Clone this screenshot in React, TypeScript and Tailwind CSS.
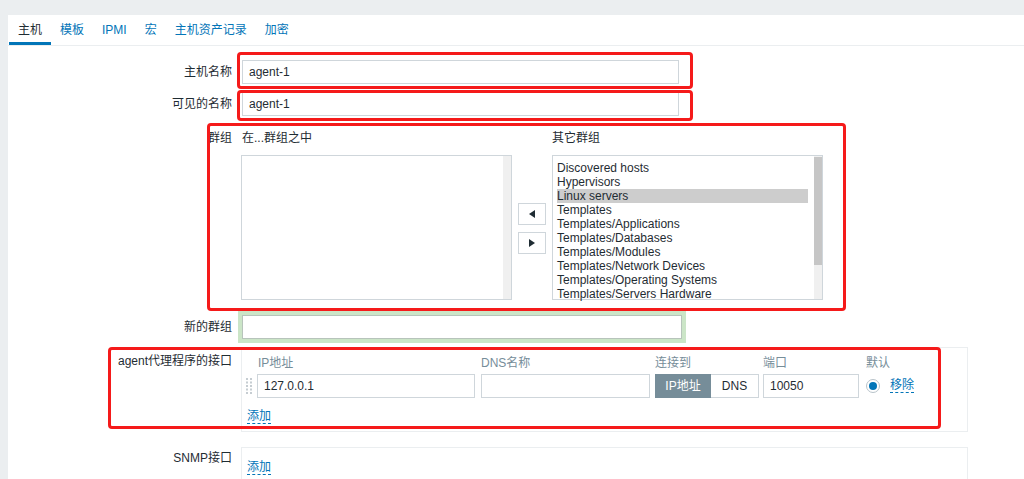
import React from "react";

const groups = [
  "Discovered hosts",
  "Hypervisors",
  "Linux servers",
  "Templates",
  "Templates/Applications",
  "Templates/Databases",
  "Templates/Modules",
  "Templates/Network Devices",
  "Templates/Operating Systems",
  "Templates/Servers Hardware",
];

function Tab({ label, active }: { label: string; active?: boolean }) {
  return (
    <div
      className={
        active
          ? "px-[9px] flex items-center border-b-[3px] border-[#0275b8] text-[#1f2c33] pt-[3px]"
          : "px-[9px] flex items-center border-b-[3px] border-transparent text-[#0275b8] pt-[3px]"
      }
    >
      {label}
    </div>
  );
}

function Handle() {
  return (
    <svg width="6" height="16" viewBox="0 0 6 16" className="block">
      {[0, 1, 2, 3, 4].map((r) =>
        [0, 1].map((c) => (
          <rect key={`${r}-${c}`} x={c * 4} y={r * 3.5} width="2" height="2" fill="#c6cdd2" />
        ))
      )}
    </svg>
  );
}

export default function App() {
  return (
    <div className="relative w-[1024px] h-[479px] overflow-hidden bg-[#ebeef0] pt-[15px] pl-[8px] text-[12px] leading-[14px] text-[#1f2c33] font-['Liberation_Sans','Noto_Sans_CJK_SC',sans-serif]">
      <div className="bg-white h-full">
        {/* Tabs */}
        <div className="flex h-[31px] border-b border-[#ebeef0] pl-[1px]">
          <Tab label="主机" active />
          <Tab label="模板" />
          <Tab label="IPMI" />
          <Tab label="宏" />
          <Tab label="主机资产记录" />
          <Tab label="加密" />
        </div>

        <div className="pt-[14px]">
          {/* Host name */}
          <div className="flex items-center">
            <div className="w-[224px] text-right">主机名称</div>
            <div className="ml-[10px] w-[437px] h-[24px] border border-[#cfd6db] flex items-center pl-[6px]">agent-1</div>
          </div>

          {/* Visible name */}
          <div className="flex items-center mt-[8px]">
            <div className="w-[224px] text-right">可见的名称</div>
            <div className="ml-[10px] w-[437px] h-[24px] border border-[#cfd6db] flex items-center pl-[6px]">agent-1</div>
          </div>

          {/* Groups */}
          <div className="flex items-start mt-[15px]">
            <div className="w-[224px] text-right">群组</div>
            <div className="ml-[9px] flex items-center">
              <div className="w-[271px]">
                <div className="h-[14px] pl-[1px]">在...群组之中</div>
                <div className="mt-[10px] h-[145px] border border-[#cfd6db] flex justify-end">
                  <div className="w-[8px] h-full bg-[#f0f0f0]" />
                </div>
              </div>
              <div className="mx-[6px] mt-[25px] flex flex-col gap-[7px]">
                <div className="w-[28px] h-[22px] border border-[#cfd6db] flex items-center justify-center bg-white">
                  <svg width="6" height="8" viewBox="0 0 6 8"><path d="M6 0 L0 4 L6 8 Z" fill="#1f2c33" /></svg>
                </div>
                <div className="w-[28px] h-[22px] border border-[#cfd6db] flex items-center justify-center bg-white">
                  <svg width="6" height="8" viewBox="0 0 6 8"><path d="M0 0 L6 4 L0 8 Z" fill="#1f2c33" /></svg>
                </div>
              </div>
              <div className="w-[271px]">
                <div className="h-[14px]">其它群组</div>
                <div className="mt-[10px] h-[145px] border border-[#cfd6db] flex">
                  <div className="flex-1 pl-[4px] pr-[6px] pt-[5px]">
                    {groups.map((g) => (
                      <div key={g} className={g === "Linux servers" ? "h-[14px] leading-[14px] bg-[#cdcdcd]" : "h-[14px] leading-[14px]"}>
                        {g}
                      </div>
                    ))}
                  </div>
                  <div className="w-[8px] h-full bg-[#f0f0f0] pt-[1px]">
                    <div className="h-[108px] bg-[#c6c6c6]" />
                  </div>
                </div>
              </div>
            </div>
          </div>

          {/* New group */}
          <div className="flex items-center mt-[15px]">
            <div className="w-[224px] text-right">新的群组</div>
            <div className="ml-[10px] w-[440px] h-[24px] border border-[#b7c4bb] shadow-[0_0_0_4px_#cbe5c7]" />
          </div>

          {/* Agent interfaces */}
          <div className="flex items-start mt-[8px]">
            <div className="w-[224px] text-right pt-[7px]">agent代理程序的接口</div>
            <div className="ml-[9px] w-[727px] h-[85px] border border-[#ebeef0] pt-[8px]">
              <div className="flex text-[#768d99] h-[14px]">
                <div className="ml-[15px] w-[218px] pl-[1px]">IP地址</div>
                <div className="ml-[6px] w-[169px]">DNS名称</div>
                <div className="ml-[5px] w-[104px]">连接到</div>
                <div className="ml-[4px] w-[96px]">端口</div>
                <div className="ml-[7px]">默认</div>
              </div>
              <div className="flex items-center mt-[4px] h-[24px]">
                <div className="ml-[4px] w-[6px]"><Handle /></div>
                <div className="ml-[5px] w-[218px] h-[24px] border border-[#cfd6db] flex items-center pl-[6px]">127.0.0.1</div>
                <div className="ml-[6px] w-[169px] h-[24px] border border-[#cfd6db]" />
                <div className="ml-[5px] w-[104px] h-[24px] flex">
                  <div className="w-[56px] h-full bg-[#768d99] text-white flex items-center justify-center">IP地址</div>
                  <div className="flex-1 h-full border border-l-0 border-[#cfd6db] flex items-center justify-center">DNS</div>
                </div>
                <div className="ml-[4px] w-[96px] h-[24px] border border-[#cfd6db] flex items-center pl-[6px]">10050</div>
                <div className="ml-[7px] w-[14px] h-[14px] rounded-full border border-[#b8c3ca] flex items-center justify-center">
                  <div className="w-[8px] h-[8px] rounded-full bg-[#0275b8]" />
                </div>
                <div className="ml-[10px] text-[#0275b8] border-b border-dashed border-[#0275b8] leading-[13px]">移除</div>
              </div>
              <div className="mt-[12px] ml-[5px] flex">
                <span className="text-[#0275b8] border-b border-dashed border-[#0275b8] leading-[13px]">添加</span>
              </div>
            </div>
          </div>

          {/* SNMP */}
          <div className="flex items-start mt-[15px]">
            <div className="w-[224px] text-right pt-[4px]">SNMP接口</div>
            <div className="ml-[9px] w-[727px] h-[60px] border border-[#ebeef0] pt-[13px]">
              <div className="ml-[5px] flex">
                <span className="text-[#0275b8] border-b border-dashed border-[#0275b8] leading-[13px]">添加</span>
              </div>
            </div>
          </div>
        </div>
      </div>

      {/* Red annotation boxes */}
      <div className="absolute left-[237px] top-[52px] w-[456px] h-[37px] border-[3px] border-[#f51a1a] rounded-[4px] pointer-events-none" />
      <div className="absolute left-[237px] top-[90px] w-[456px] h-[31px] border-[3px] border-[#f51a1a] rounded-[4px] pointer-events-none" />
      <div className="absolute left-[207px] top-[123px] w-[639px] h-[188px] border-[3px] border-[#f51a1a] rounded-[4px] pointer-events-none" />
      <div className="absolute left-[108px] top-[347px] w-[833px] h-[82px] border-[3px] border-[#f51a1a] rounded-[4px] pointer-events-none" />
    </div>
  );
}
